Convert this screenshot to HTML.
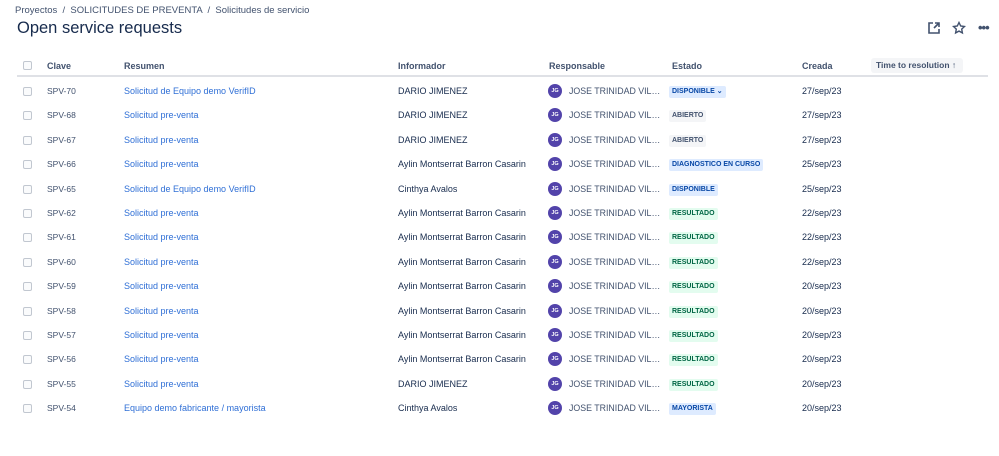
<!DOCTYPE html>
<html><head><meta charset="utf-8"><style>
body{margin:0;width:999px;height:456px;background:#fff;font-family:"Liberation Sans",sans-serif;color:#172b4d;position:relative;overflow:hidden}
.a{position:absolute;white-space:nowrap}
.bc{left:15px;top:5px;font-size:9.5px;color:#42526e}
h1{position:absolute;left:17px;top:19px;margin:0;font-size:16.5px;font-weight:500;color:#172b4d}
.hd{top:61px;font-size:9px;color:#42526e;font-weight:bold}
.line{position:absolute;left:17px;top:75px;width:971px;height:2px;background:#dfe1e6}
.cb{position:absolute;left:23px;width:7px;height:7px;border:1px solid #c1c7d0;border-radius:2px;background:#fafbfc}
.r{font-size:9px}
.key{color:#42526e;font-size:8.5px}
.lnk{color:#2f6fd6}
.av{position:absolute;left:548px;width:14px;height:14px;border-radius:50%;background:#5243aa;color:#fff;font-size:5.5px;text-align:center;line-height:14px;font-weight:bold}
.as{width:94px;overflow:hidden;text-overflow:ellipsis;color:#42526e;font-size:8.8px}
.lz{font-size:7px;font-weight:bold;padding:2px 3px;border-radius:2px;line-height:8px}
.blue{background:#deebff;color:#0747a6}
.grey{background:#f4f5f7;color:#42526e}
.green{background:#e3fcef;color:#006644}
</style></head><body>
<div class="a bc">Proyectos &nbsp;/&nbsp; SOLICITUDES DE PREVENTA &nbsp;/&nbsp; Solicitudes de servicio</div>
<h1>Open service requests</h1>
<svg class="a" style="left:927px;top:21px" width="14" height="14" viewBox="0 0 14 14" fill="none" stroke="#42526e" stroke-width="1.6"><path d="M6 2H2v10h10V8"/><path d="M7 7l5-5M8 2h4v4"/></svg>
<svg class="a" style="left:952px;top:21px" width="14" height="14" viewBox="0 0 14 14" fill="none" stroke="#42526e" stroke-width="1.4"><path d="M7 1.5l1.7 3.5 3.8.5-2.8 2.6.7 3.8L7 10.1 3.6 11.9l.7-3.8L1.5 5.5l3.8-.5z"/></svg>
<div class="a" style="left:978px;top:20px;font-size:13px;font-weight:bold;color:#42526e;letter-spacing:-1px">•••</div>
<div class="cb" style="top:61px"></div>
<div class="a hd" style="left:47px">Clave</div>
<div class="a hd" style="left:124px">Resumen</div>
<div class="a hd" style="left:398px">Informador</div>
<div class="a hd" style="left:549px">Responsable</div>
<div class="a hd" style="left:672px">Estado</div>
<div class="a hd" style="left:802px">Creada</div>
<div class="a" style="left:871px;top:58px;width:92px;height:15px;background:#f4f5f7;border-radius:3px;font-size:8.5px;color:#42526e;font-weight:bold;line-height:15px;padding-left:5px;box-sizing:border-box">Time to resolution ↑</div>
<div class="line"></div>
<div id="rows"></div>
<script>
var d=[["SPV-70","Solicitud de Equipo demo VerifID","DARIO JIMENEZ","DISPONIBLE ⌄","blue","27/sep/23"],
["SPV-68","Solicitud pre-venta","DARIO JIMENEZ","ABIERTO","grey","27/sep/23"],
["SPV-67","Solicitud pre-venta","DARIO JIMENEZ","ABIERTO","grey","27/sep/23"],
["SPV-66","Solicitud pre-venta","Aylin Montserrat Barron Casarin","DIAGNOSTICO EN CURSO","blue","25/sep/23"],
["SPV-65","Solicitud de Equipo demo VerifID","Cinthya Avalos","DISPONIBLE","blue","25/sep/23"],
["SPV-62","Solicitud pre-venta","Aylin Montserrat Barron Casarin","RESULTADO","green","22/sep/23"],
["SPV-61","Solicitud pre-venta","Aylin Montserrat Barron Casarin","RESULTADO","green","22/sep/23"],
["SPV-60","Solicitud pre-venta","Aylin Montserrat Barron Casarin","RESULTADO","green","22/sep/23"],
["SPV-59","Solicitud pre-venta","Aylin Montserrat Barron Casarin","RESULTADO","green","20/sep/23"],
["SPV-58","Solicitud pre-venta","Aylin Montserrat Barron Casarin","RESULTADO","green","20/sep/23"],
["SPV-57","Solicitud pre-venta","Aylin Montserrat Barron Casarin","RESULTADO","green","20/sep/23"],
["SPV-56","Solicitud pre-venta","Aylin Montserrat Barron Casarin","RESULTADO","green","20/sep/23"],
["SPV-55","Solicitud pre-venta","DARIO JIMENEZ","RESULTADO","green","20/sep/23"],
["SPV-54","Equipo demo fabricante / mayorista","Cinthya Avalos","MAYORISTA","blue","20/sep/23"]];
var h="";
d.forEach(function(r,i){var y=91+i*24.4;
h+='<div class="cb" style="top:'+(y-4)+'px"></div>';
h+='<div class="a key" style="left:47px;top:'+(y-5)+'px">'+r[0]+'</div>';
h+='<div class="a r lnk" style="left:124px;top:'+(y-5)+'px">'+r[1]+'</div>';
h+='<div class="a r" style="left:398px;top:'+(y-5)+'px">'+r[2]+'</div>';
h+='<div class="av" style="top:'+(y-7)+'px">JG</div>';
h+='<div class="a as" style="left:569px;top:'+(y-5)+'px">JOSE TRINIDAD VILLEGAS GARCIA</div>';
h+='<div class="a lz '+r[4]+'" style="left:669px;top:'+(y-5)+'px">'+r[3]+'</div>';
h+='<div class="a r" style="left:802px;top:'+(y-5)+'px">'+r[5]+'</div>';
});
document.getElementById("rows").innerHTML=h;
</script>
</body></html>
